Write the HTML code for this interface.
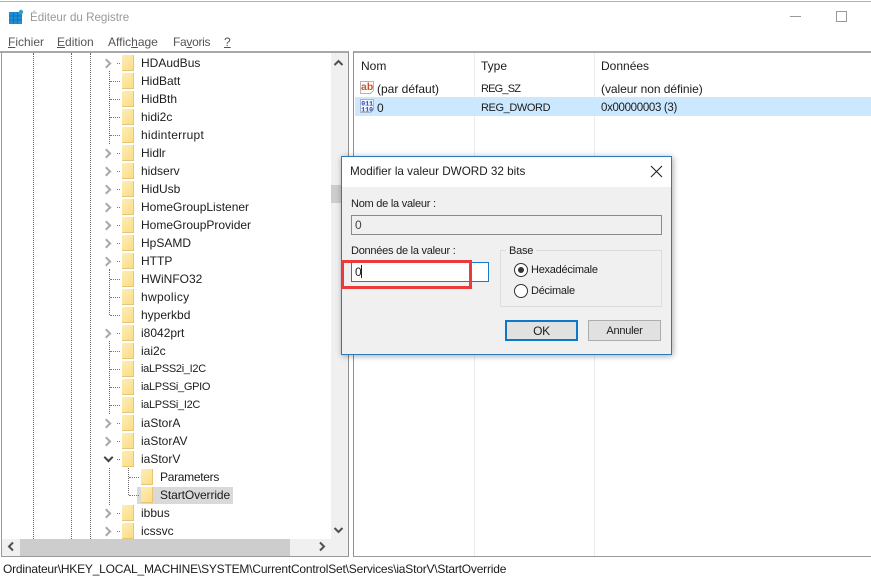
<!DOCTYPE html>
<html lang="fr"><head><meta charset="utf-8"><title>Éditeur du Registre</title>
<style>
html,body{margin:0;padding:0;background:#fff}
#w{position:relative;width:871px;height:577px;overflow:hidden;background:#fff;font:12px/18px "Liberation Sans",sans-serif;color:#1c1c1c}
#w div{position:absolute}
.t{white-space:nowrap}
.d{font-size:11px;letter-spacing:-.25px}
u{text-decoration:underline}
#tree{left:2px;top:53px;width:329px;height:486px;overflow:hidden}
.r{left:139px;white-space:nowrap;height:18px;margin-top:1px}
.f{width:12px;height:16px;left:120px;margin-top:1px;background:linear-gradient(135deg,#fdeeb8,#fbdb80);box-shadow:inset -1px -1px 0 #e6c674}
.c{left:101px;width:5px;height:5px;margin-top:2px;border-top:2px solid #a8a8a8;border-right:2px solid #a8a8a8;transform:rotate(45deg)}
.h{left:108px;width:10px;height:0;margin-top:1px;border-top:1px dotted #777}
.hd{left:115px;width:3px;height:0;margin-top:1px;border-top:1px dotted #777}
.v{width:0;border-left:1px dotted #666}
.n{font-size:11px;letter-spacing:-.3px}
</style></head><body><div id="w">

<div style="left:0;top:1px;width:871px;height:1px;background:#b0b0b0"></div>
<svg style="position:absolute;left:9px;top:9px" width="15" height="15" viewBox="0 0 15 15">
<rect x="0" y="3" width="13" height="12" fill="#1e8fd6"/>
<path d="M4.500 3v12M8.500 3v12M0 7h13M0 11h13" stroke="#0f6fae" stroke-width=".8"/>
<circle cx="12" cy="3" r="2.200" fill="#3a9fb8"/>
</svg>
<div class="t" style="left:30px;top:9px;color:#999;font-size:11.6px">Éditeur du Registre</div>
<div style="left:790px;top:16px;width:11px;height:1px;background:#999"></div>
<div style="left:836px;top:11px;width:9px;height:9px;border:1px solid #999"></div>

<div class="t" style="left:8px;top:33px;color:#555"><u>F</u>ichier</div>
<div class="t" style="left:57px;top:33px;color:#555"><u>E</u>dition</div>
<div class="t" style="left:108px;top:33px;color:#555">Affic<u>h</u>age</div>
<div class="t" style="left:173px;top:33px;color:#555;letter-spacing:-.3px">Fa<u>v</u>oris</div>
<div class="t" style="left:224px;top:33px;color:#555"><u>?</u></div>

<div style="left:0;top:51px;width:349px;height:2px;background:#a8a8a8"></div>
<div style="left:353px;top:51px;width:518px;height:2px;background:#a8a8a8"></div>
<div style="left:1px;top:52px;width:1px;height:505px;background:#999"></div>
<div style="left:348px;top:52px;width:1px;height:505px;background:#8f8f8f"></div>
<div style="left:353px;top:52px;width:1px;height:505px;background:#8f8f8f"></div>
<div style="left:1px;top:556px;width:348px;height:1px;background:#999"></div>
<div style="left:353px;top:556px;width:518px;height:1px;background:#999"></div>

<div id="tree">
<div class="v" style="left:31px;top:0;height:486px"></div>
<div class="v" style="left:69px;top:0;height:486px"></div>
<div class="v" style="left:88px;top:0;height:486px"></div>
<div class="v" style="left:107px;top:18px;height:73px"></div>
<div class="v" style="left:107px;top:216px;height:46px"></div>
<div class="v" style="left:107px;top:288px;height:73px"></div>
<div class="v" style="left:107px;top:415px;height:37px"></div>
<div class="v" style="left:126px;top:415px;height:27px"></div>

<div class="c" style="top:5px"></div><div class="hd" style="top:9px"></div><div class="f" style="top:1px"></div><div class="r" style="top:0">HDAudBus</div>
<div class="h" style="top:27px"></div><div class="f" style="top:19px"></div><div class="r" style="top:18px">HidBatt</div>
<div class="h" style="top:45px"></div><div class="f" style="top:37px"></div><div class="r" style="top:36px">HidBth</div>
<div class="h" style="top:63px"></div><div class="f" style="top:55px"></div><div class="r" style="top:54px">hidi2c</div>
<div class="h" style="top:81px"></div><div class="f" style="top:73px"></div><div class="r" style="top:72px;letter-spacing:.25px">hidinterrupt</div>
<div class="c" style="top:95px"></div><div class="hd" style="top:99px"></div><div class="f" style="top:91px"></div><div class="r" style="top:90px">Hidlr</div>
<div class="c" style="top:113px"></div><div class="hd" style="top:117px"></div><div class="f" style="top:109px"></div><div class="r" style="top:108px">hidserv</div>
<div class="c" style="top:131px"></div><div class="hd" style="top:135px"></div><div class="f" style="top:127px"></div><div class="r" style="top:126px">HidUsb</div>
<div class="c" style="top:149px"></div><div class="hd" style="top:153px"></div><div class="f" style="top:145px"></div><div class="r" style="top:144px">HomeGroupListener</div>
<div class="c" style="top:167px"></div><div class="hd" style="top:171px"></div><div class="f" style="top:163px"></div><div class="r" style="top:162px">HomeGroupProvider</div>
<div class="c" style="top:185px"></div><div class="hd" style="top:189px"></div><div class="f" style="top:181px"></div><div class="r" style="top:180px">HpSAMD</div>
<div class="c" style="top:203px"></div><div class="hd" style="top:207px"></div><div class="f" style="top:199px"></div><div class="r" style="top:198px">HTTP</div>
<div class="h" style="top:225px"></div><div class="f" style="top:217px"></div><div class="r" style="top:216px">HWiNFO32</div>
<div class="h" style="top:243px"></div><div class="f" style="top:235px"></div><div class="r" style="top:234px;letter-spacing:.3px">hwpolicy</div>
<div class="h" style="top:261px"></div><div class="f" style="top:253px"></div><div class="r" style="top:252px">hyperkbd</div>
<div class="c" style="top:275px"></div><div class="hd" style="top:279px"></div><div class="f" style="top:271px"></div><div class="r" style="top:270px">i8042prt</div>
<div class="h" style="top:297px"></div><div class="f" style="top:289px"></div><div class="r" style="top:288px">iai2c</div>
<div class="h" style="top:315px"></div><div class="f" style="top:307px"></div><div class="r n" style="top:306px">iaLPSS2i_I2C</div>
<div class="h" style="top:333px"></div><div class="f" style="top:325px"></div><div class="r n" style="top:324px">iaLPSSi_GPIO</div>
<div class="h" style="top:351px"></div><div class="f" style="top:343px"></div><div class="r n" style="top:342px">iaLPSSi_I2C</div>
<div class="c" style="top:365px"></div><div class="hd" style="top:369px"></div><div class="f" style="top:361px"></div><div class="r" style="top:360px">iaStorA</div>
<div class="c" style="top:383px"></div><div class="hd" style="top:387px"></div><div class="f" style="top:379px"></div><div class="r" style="top:378px">iaStorAV</div>
<div class="c" style="top:399px;left:103px;border-color:#444;transform:rotate(135deg)"></div><div class="hd" style="top:405px"></div><div class="f" style="top:397px"></div><div class="r" style="top:396px">iaStorV</div>
<div class="h" style="top:423px;left:127px"></div><div class="f" style="top:415px;left:139px"></div><div class="r" style="top:414px;left:158px;letter-spacing:-.3px">Parameters</div>
<div style="left:135px;top:434px;width:96px;height:17px;background:#d9d9d9"></div>
<div class="h" style="top:441px;left:127px"></div><div class="f" style="top:433px;left:139px"></div><div class="r" style="top:432px;left:158px;letter-spacing:-.1px">StartOverride</div>
<div class="c" style="top:455px"></div><div class="hd" style="top:459px"></div><div class="f" style="top:451px"></div><div class="r" style="top:450px">ibbus</div>
<div class="c" style="top:473px"></div><div class="hd" style="top:477px"></div><div class="f" style="top:469px"></div><div class="r" style="top:468px">icssvc</div>
</div>

<div style="left:331px;top:53px;width:17px;height:486px;background:#f0f0f0"></div>
<div style="left:331px;top:185px;width:17px;height:18px;background:#cdcdcd"></div>
<svg style="position:absolute;left:333px;top:59px" width="11" height="8" viewBox="0 0 11 8"><path d="M1.500 6L5.500 2L9.500 6" fill="none" stroke="#505050" stroke-width="2"/></svg>
<svg style="position:absolute;left:333px;top:526px" width="11" height="8" viewBox="0 0 11 8"><path d="M1.500 2L5.500 6L9.500 2" fill="none" stroke="#505050" stroke-width="2"/></svg>

<div style="left:2px;top:539px;width:346px;height:17px;background:#f0f0f0"></div>
<div style="left:20px;top:539px;width:270px;height:17px;background:#cdcdcd"></div>
<svg style="position:absolute;left:7px;top:541px" width="8" height="11" viewBox="0 0 8 11"><path d="M6 1.500L2 5.500L6 9.500" fill="none" stroke="#505050" stroke-width="2"/></svg>
<svg style="position:absolute;left:318px;top:541px" width="8" height="11" viewBox="0 0 8 11"><path d="M2 1.500L6 5.500L2 9.500" fill="none" stroke="#505050" stroke-width="2"/></svg>

<div style="left:474px;top:53px;width:1px;height:503px;background:#ececec"></div>
<div style="left:594px;top:53px;width:1px;height:503px;background:#ececec"></div>
<div class="t" style="left:361px;top:57px">Nom</div>
<div class="t" style="left:481px;top:57px">Type</div>
<div class="t" style="left:601px;top:57px">Données</div>

<svg style="position:absolute;left:360px;top:80px" width="15" height="15" viewBox="0 0 15 15"><path d="M.5 1.500h13v9l-3 3h-10z" fill="#fff" stroke="#b5b5b5"/><text x="1" y="10" font-family="Liberation Sans" font-weight="bold" font-size="10.500" fill="#c8562c">ab</text></svg>
<div class="t" style="left:377px;top:80px">(par défaut)</div>
<div class="t" style="left:481px;top:80px;font-size:11px;letter-spacing:-.8px">REG_SZ</div>
<div class="t" style="left:601px;top:80px;letter-spacing:-.05px">(valeur non définie)</div>

<div style="left:355px;top:97px;width:516px;height:19px;background:#cce8ff"></div>
<svg style="position:absolute;left:360px;top:99px" width="15" height="15" viewBox="0 0 15 15"><path d="M.5 .5h13v10l-3 3h-10z" fill="#eef4fb" stroke="#a9b4c4"/><text x="1.300" y="6.300" font-family="Liberation Mono" font-weight="bold" font-size="6.500" fill="#2a3fb0">011</text><text x="1.300" y="12.500" font-family="Liberation Mono" font-weight="bold" font-size="6.500" fill="#2a3fb0">110</text></svg>
<div class="t" style="left:377px;top:99px">0</div>
<div class="t" style="left:481px;top:99px;font-size:11px;letter-spacing:-.4px">REG_DWORD</div>
<div class="t" style="left:601px;top:99px;font-size:11.5px;letter-spacing:-.33px">0x00000003 (3)</div>

<div class="t" style="left:3px;top:560px;letter-spacing:-.2px">Ordinateur\HKEY_LOCAL_MACHINE\SYSTEM\CurrentControlSet\Services\iaStorV\StartOverride</div>

<div style="left:341px;top:156px;width:329px;height:197px;border:1px solid #2c7ab8;background:#f0f0f0;box-shadow:1px 1px 6px rgba(0,0,0,.35)"></div>
<div style="left:342px;top:157px;width:329px;height:30px;background:#fff"></div>
<div class="t" style="left:350px;top:163px;font-size:11.7px">Modifier la valeur DWORD 32 bits</div>
<svg style="position:absolute;left:650px;top:165px" width="13" height="13" viewBox="0 0 13 13"><path d="M1 1L12 12M12 1L1 12" stroke="#222" stroke-width="1.100"/></svg>

<div class="t d" style="left:351px;top:195px">Nom de la valeur :</div>
<div style="left:351px;top:215px;width:309px;height:18px;border:1px solid #8a8a8a;background:#f0f0f0"></div>
<div class="t" style="left:355px;top:216px;color:#444">0</div>
<div class="t d" style="left:351px;top:242px">Données de la valeur :</div>
<div style="left:351px;top:262px;width:136px;height:18px;border:1px solid #1f78c4;background:#fff"></div>
<div class="t" style="left:355px;top:263px">0</div>
<div style="left:361px;top:265px;width:1px;height:13px;background:#222"></div>
<div style="left:342px;top:260px;width:125px;height:23px;border:3px solid #ea3a3c;border-left-width:2px;border-right-width:3px"></div>

<div style="left:500px;top:250px;width:160px;height:55px;border:1px solid #dcdcdc"></div>
<div class="t d" style="left:506px;top:242px;padding:0 3px;background:#f0f0f0">Base</div>
<div style="left:514px;top:263px;width:12px;height:12px;border:1px solid #333;border-radius:50%;background:#fff"></div>
<div style="left:518px;top:267px;width:6px;height:6px;border-radius:50%;background:#333"></div>
<div class="t d" style="left:531px;top:261px">Hexadécimale</div>
<div style="left:514px;top:284px;width:12px;height:12px;border:1px solid #333;border-radius:50%;background:#fff"></div>
<div class="t d" style="left:531px;top:282px">Décimale</div>

<div class="t d" style="left:505px;top:320px;width:69px;height:17px;border:2px solid #0e78c8;background:#e1e1e1;text-align:center;line-height:19px;font-size:12px">OK</div>
<div class="t d" style="left:588px;top:320px;width:71px;height:19px;border:1px solid #adadad;background:#e1e1e1;text-align:center;line-height:21px">Annuler</div>

</div></body></html>
